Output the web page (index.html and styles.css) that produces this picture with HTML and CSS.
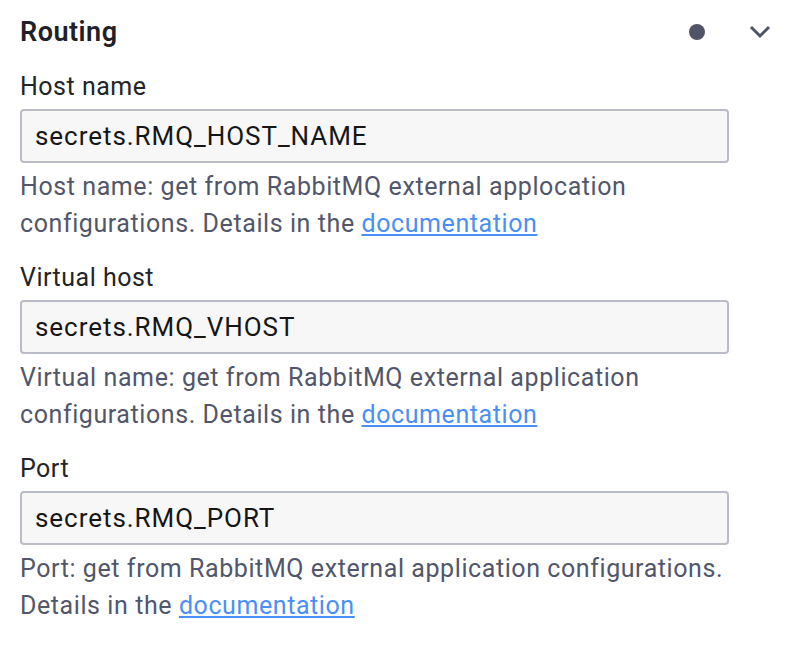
FILE: index.html
```html
<!DOCTYPE html>
<html lang="en">
<head>
<meta charset="utf-8">
<title>Routing</title>
<link rel="stylesheet" href="styles.css">
</head>
<body>
<div class="panel">
  <div class="header">
    <span class="title">Routing</span>
    <span class="dot"></span>
    <svg class="chevron" width="24" height="16" viewBox="0 0 24 16"><path d="M3 3 L12 12 L21 3" fill="none" stroke="#4f5467" stroke-width="3"/></svg>
  </div>
  <div class="field">
    <div class="label">Host name</div>
    <div class="input">secrets.RMQ_HOST_NAME</div>
    <div class="desc">Host name: get from RabbitMQ external applocation configurations. Details in the <a href="#">documentation</a></div>
  </div>
  <div class="field">
    <div class="label">Virtual host</div>
    <div class="input">secrets.RMQ_VHOST</div>
    <div class="desc">Virtual name: get from RabbitMQ external application configurations. Details in the <a href="#">documentation</a></div>
  </div>
  <div class="field">
    <div class="label">Port</div>
    <div class="input">secrets.RMQ_PORT</div>
    <div class="desc">Port: get from RabbitMQ external application configurations. Details in the <a href="#">documentation</a></div>
  </div>
</div>
</body>
</html>
```
FILE: styles.css
```css
html, body {
  margin: 0;
  background: #ffffff;
}
body {
  font-family: Roboto, "Noto Sans", sans-serif;
  color: #22242a;
}
.panel {
  padding: 0 18px 0 20px;
}
.header {
  height: 64px;
  display: flex;
  align-items: center;
}
.title {
  flex: 1;
  font-size: 27px;
  font-weight: 600;
  letter-spacing: 0.5px;
  color: #1f2126;
}
.dot {
  width: 16px;
  height: 16px;
  border-radius: 50%;
  background: #4f5467;
  margin-right: 43px;
}
.chevron {
  display: block;
}
.field {
  padding-top: 8px;
  width: 709px;
  padding-bottom: 13px;
}
.label {
  font-size: 25px;
  letter-spacing: 0.5px;
  line-height: 30px;
  margin-bottom: 7px;
}
.input {
  box-sizing: border-box;
  height: 54px;
  border: 2px solid #babdc7;
  border-radius: 4px;
  background: #f7f7f8;
  padding: 0 13px;
  display: flex;
  align-items: center;
  font-size: 26px;
  letter-spacing: 0.95px;
  color: #161616;
}
.desc {
  margin-top: 5px;
  font-size: 25px;
  letter-spacing: 0.58px;
  line-height: 37px;
  color: #52566a;
}
.desc a {
  color: #4a8ff5;
  text-decoration: underline;
  text-underline-offset: 2px;
}
```
